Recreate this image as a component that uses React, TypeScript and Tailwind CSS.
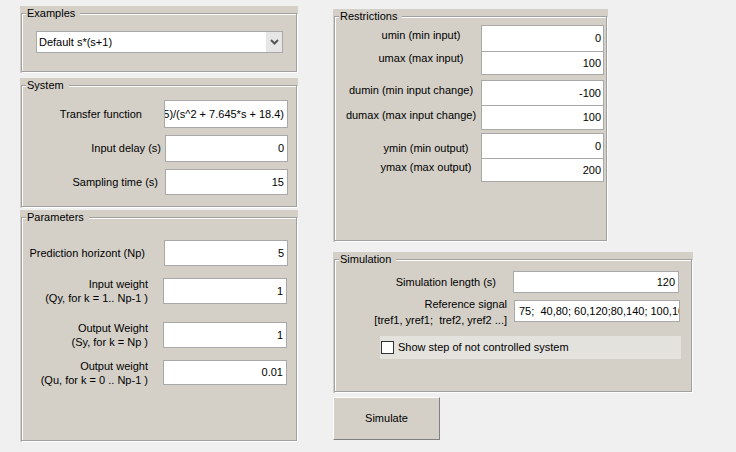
import type { ReactNode } from "react";

interface PanelProps {
  title: string;
  className: string;
  children: ReactNode;
}

// Classic etched group box: gray line with a white highlight, title sits on the top edge
function Panel({ title, className, children }: PanelProps) {
  return (
    <div className={`bg-[#d4d0c8] pb-px pl-px pr-px pt-[7px] ${className}`}>
      <div className="relative h-full border border-[#a0a0a0] shadow-[inset_1px_1px_0_#fff,1px_1px_0_#fff]">
        <span className="absolute left-[4px] top-[-7px] bg-[#d4d0c8] pl-px pr-[5px] leading-[13px] text-black">
          {title}
        </span>
        {children}
      </div>
    </div>
  );
}

const BOX =
  "flex shrink-0 items-center overflow-hidden whitespace-nowrap border border-[#a9a9a9] bg-white";

export default function App() {
  return (
    <div className="flex h-[452px] w-[736px] overflow-hidden bg-[#f0f0f0] pl-[20px] pt-[6px] font-['Liberation_Sans',Arial,sans-serif] text-[11px] text-black">
      {/* Left column */}
      <div className="flex w-[278px] flex-col">
        <Panel title="Examples" className="h-[67px]">
          <div className="pl-[14px] pt-[17px]">
            <div className="flex h-[22px] w-[247px] items-center border border-[#a9a9a9] bg-white">
              <span className="flex-1 pl-[2px]">Default s*(s+1)</span>
              <div className="flex h-full w-[16px] items-center justify-center bg-[#e6e6e6]">
                <svg width="9" height="6" viewBox="0 0 9 6">
                  <path d="M1 1l3.5 3.5L8 1" stroke="#555" strokeWidth="2" fill="none" />
                </svg>
              </div>
            </div>
          </div>
        </Panel>

        <Panel title="System" className="mt-[5px] h-[130px]">
          <div className="flex flex-col">
            <div className="mt-[14px] flex items-center">
              <div className="w-[120px] text-right">Transfer function</div>
              <div className={`${BOX} ml-[22px] h-[28px] w-[124px] justify-end pr-[3px]`}>
                1.525)/(s^2 + 7.645*s + 18.4)
              </div>
            </div>
            <div className="mt-[7px] flex items-center">
              <div className="w-[139px] text-right">Input delay (s)</div>
              <div className={`${BOX} ml-[4px] h-[27px] w-[123px] justify-end pr-[3px]`}>0</div>
            </div>
            <div className="mt-[7px] flex items-center">
              <div className="w-[136px] text-right">Sampling time (s)</div>
              <div className={`${BOX} ml-[7px] h-[26px] w-[123px] justify-end pr-[3px]`}>15</div>
            </div>
          </div>
        </Panel>

        <Panel title="Parameters" className="mt-[2px] h-[232px]">
          <div className="flex flex-col">
            <div className="mt-[22px] flex items-center">
              <div className="w-[123px] text-right">Prediction horizont (Np)</div>
              <div className={`${BOX} ml-[19px] h-[26px] w-[124px] justify-end pr-[3px]`}>5</div>
            </div>
            <div className="mt-[12px] flex items-center">
              <div className="-my-px w-[126px] text-right leading-[14px]">
                <div>Input weight</div>
                <div>(Qy, for k = 1.. Np-1 )</div>
              </div>
              <div className={`${BOX} ml-[15px] h-[26px] w-[124px] justify-end pr-[3px]`}>1</div>
            </div>
            <div className="mt-[18px] flex items-center">
              <div className="-my-px w-[126px] text-right leading-[14px]">
                <div>Output Weight</div>
                <div>(Sy, for k = Np )</div>
              </div>
              <div className={`${BOX} ml-[15px] h-[26px] w-[124px] justify-end pr-[3px]`}>1</div>
            </div>
            <div className="mt-[12px] flex items-center">
              <div className="-my-[2px] w-[126px] text-right leading-[14px]">
                <div>Output weight</div>
                <div>(Qu, for k = 0 .. Np-1 )</div>
              </div>
              <div className={`${BOX} ml-[15px] h-[25px] w-[124px] justify-end pr-[3px]`}>0.01</div>
            </div>
          </div>
        </Panel>
      </div>

      {/* Right column */}
      <div className="ml-[35px] mt-[3px] flex flex-col">
        <Panel title="Restrictions" className="h-[233px] w-[275px]">
          <div className="flex flex-col leading-[13px]">
            <div className="mt-[8px] flex items-center">
              <div className="ml-[26px] w-[120px] whitespace-nowrap pb-[6px] text-center">umin (min input)</div>
              <div className={`${BOX} h-[27px] w-[123px] justify-end pr-[2px]`}>0</div>
            </div>
            <div className="flex items-center">
              <div className="ml-[26px] w-[120px] whitespace-nowrap pb-[10px] text-center">umax (max input)</div>
              <div className={`${BOX} h-[23px] w-[123px] justify-end border-t-0 pr-[2px]`}>100</div>
            </div>

            <div className="mt-[5px] flex items-center">
              <div className="ml-[6px] w-[140px] whitespace-nowrap pb-[5px] text-center">dumin (min input change)</div>
              <div className={`${BOX} h-[26px] w-[123px] justify-end pr-[2px]`}>-100</div>
            </div>
            <div className="flex items-center">
              <div className="ml-[6px] w-[140px] whitespace-nowrap pb-[5px] text-center">dumax (max input change)</div>
              <div className={`${BOX} h-[24px] w-[123px] justify-end border-t-0 pr-[2px]`}>100</div>
            </div>

            <div className="mt-[3px] flex items-center">
              <div className="ml-[36px] w-[110px] whitespace-nowrap pt-[5px] text-center">ymin (min output)</div>
              <div className={`${BOX} h-[26px] w-[123px] justify-end pr-[2px]`}>0</div>
            </div>
            <div className="flex items-center">
              <div className="ml-[36px] w-[110px] whitespace-nowrap pb-[6px] text-center">ymax (max output)</div>
              <div className={`${BOX} h-[23px] w-[123px] justify-end border-t-0 pr-[2px]`}>200</div>
            </div>
          </div>
        </Panel>

        <Panel title="Simulation" className="mt-[10px] h-[141px] w-[360px]">
          <div className="flex flex-col">
            <div className="mt-[11px] flex items-center">
              <div className="w-[161px] text-right">Simulation length (s)</div>
              <div className={`${BOX} ml-[17px] h-[22px] w-[166px] justify-end pr-[3px]`}>120</div>
            </div>
            <div className="mt-[3px] flex items-start">
              <div className="w-[172px] whitespace-nowrap text-right leading-[16px]">
                <div>Reference signal</div>
                <div className="whitespace-pre">[tref1, yref1;  tref2, yref2 ...]</div>
              </div>
              <div className={`${BOX} ml-[7px] mt-[4px] h-[22px] w-[166px] whitespace-pre pl-[4px]`}>
                75;  40,80; 60,120;80,140; 100,100
              </div>
            </div>
            <div className="ml-[45px] mt-[8px] flex h-[23px] w-[301px] items-center bg-[#e4e2dd]">
              <div className="ml-px h-[13px] w-[13px] border border-[#333] bg-white" />
              <span className="ml-[4px]">Show step of not controlled system</span>
            </div>
          </div>
        </Panel>

        <button className="mt-[4px] flex h-[43px] w-[107px] items-center justify-center border border-b-[#808080] border-l-white border-r-[#808080] border-t-white bg-[#d4d0c8] text-[11px]">
          Simulate
        </button>
      </div>
    </div>
  );
}
